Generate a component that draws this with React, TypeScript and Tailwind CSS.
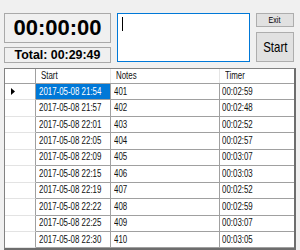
import React from "react";

const rows = [
  ["2017-05-08 21:54", "401", "00:02:59"],
  ["2017-05-08 21:57", "402", "00:02:48"],
  ["2017-05-08 22:01", "403", "00:02:52"],
  ["2017-05-08 22:05", "404", "00:02:57"],
  ["2017-05-08 22:09", "405", "00:03:07"],
  ["2017-05-08 22:15", "406", "00:03:03"],
  ["2017-05-08 22:19", "407", "00:02:52"],
  ["2017-05-08 22:22", "408", "00:02:59"],
  ["2017-05-08 22:25", "409", "00:03:07"],
  ["2017-05-08 22:30", "410", "00:03:05"],
];

// the small WinForms text is narrower than Arial, squeeze it a bit
const Narrow: React.FC<{ children: React.ReactNode; center?: boolean }> = ({ children, center }) => (
  <span className={`inline-block whitespace-nowrap scale-x-[0.79] ${center ? "origin-center" : "origin-left"}`}>
    {children}
  </span>
);

const App: React.FC = () => (
  <div className="w-[300px] h-[250px] bg-[#f0f0f0] overflow-hidden flex flex-col pt-[13px] pl-[4px] text-black font-['Liberation_Sans',Arial,sans-serif]">
    <div className="flex">
      <div className="w-[107px] flex flex-col gap-[4px]">
        <div className="h-[30px] border border-[#a9a9a9] flex items-center justify-center font-bold text-[22px] leading-none">
          00:00:00
        </div>
        <div className="h-[16px] border border-[#a9a9a9] flex items-center justify-center font-bold text-[12.4px] leading-none">
          Total: 00:29:49
        </div>
      </div>
      <div className="ml-[6px] w-[133px] h-[49px] bg-white border border-[#0078d7] pl-[4px] pt-[3px]">
        <div className="w-px h-[14px] bg-black" />
      </div>
      <div className="ml-[6px] w-[38px] flex flex-col gap-[5px]">
        <div className="h-[14px] bg-[#e1e1e1] border border-[#adadad] flex items-center justify-center text-[9px] leading-none">
          <Narrow center>Exit</Narrow>
        </div>
        <div className="h-[30px] bg-[#e1e1e1] border border-[#adadad] flex items-center justify-center text-[14.5px] leading-none">
          <Narrow center>Start</Narrow>
        </div>
      </div>
    </div>
    <div className="mt-[5px] w-[292px] flex-1 bg-white border-l border-t border-[#828282] border-r-2 border-b-2 border-r-[#6d6d6d] border-b-[#6d6d6d] text-[10px] leading-none text-[#111]">
      <div className="flex h-[15px] border-b border-[#a0a0a0]">
        <div className="w-[31px] border-r border-[#a0a0a0]" />
        <div className="w-[75px] border-r border-[#e5e5e5] flex items-center pl-[5px]">
          <Narrow>Start</Narrow>
        </div>
        <div className="w-[109px] border-r border-[#e5e5e5] flex items-center pl-[5px]">
          <Narrow>Notes</Narrow>
        </div>
        <div className="flex-1 flex items-center pl-[5px]">
          <Narrow>Timer</Narrow>
        </div>
      </div>
      {rows.map((r, i) => (
        <div key={i} className="flex h-[16.45px]">
          <div className="w-[31px] border-r border-b border-r-[#a0a0a0] border-b-[#e3e3e3] flex items-center pl-[6px]">
            {i === 0 && (
              <svg width="4" height="7" viewBox="0 0 4 7">
                <path d="M0 0 L4 3.5 L0 7 Z" fill="#000" />
              </svg>
            )}
          </div>
          <div
            className={`w-[75px] border-r border-b border-[#a0a0a0] flex items-center pl-[3px] ${
              i === 0 ? "bg-[#0078d7] text-white" : ""
            }`}
          >
            <Narrow>{r[0]}</Narrow>
          </div>
          <div className="w-[109px] border-r border-b border-[#a0a0a0] flex items-center pl-[3px]">
            <Narrow>{r[1]}</Narrow>
          </div>
          <div className="flex-1 border-b border-[#a0a0a0] flex items-center pl-[2px]">
            <Narrow>{r[2]}</Narrow>
          </div>
        </div>
      ))}
    </div>
  </div>
);

export default App;
